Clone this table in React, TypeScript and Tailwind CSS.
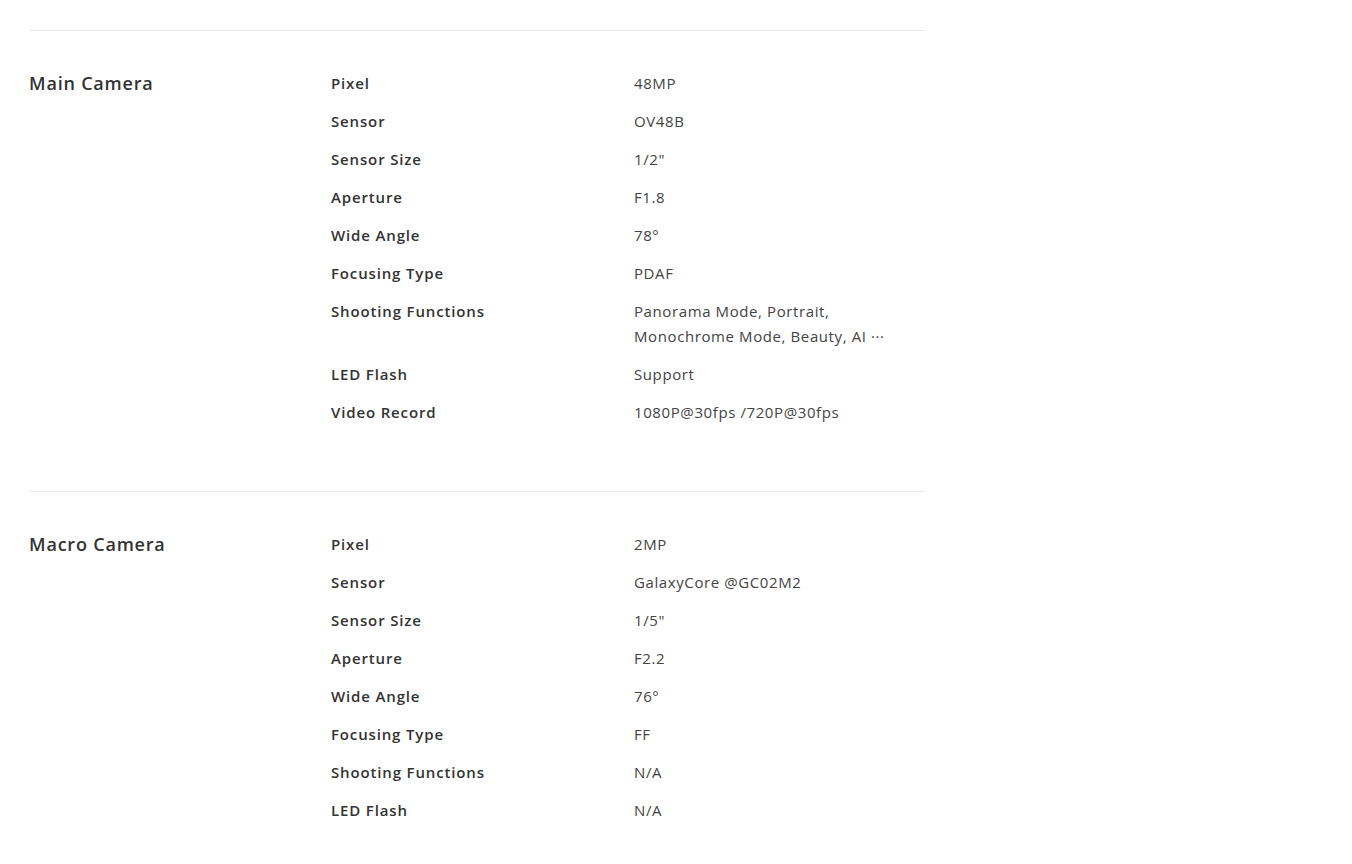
import React from 'react'

type Spec = { label: string; value: React.ReactNode }

const sections: { title: string; specs: Spec[] }[] = [
  {
    title: 'Main Camera',
    specs: [
      { label: 'Pixel', value: '48MP' },
      { label: 'Sensor', value: 'OV48B' },
      { label: 'Sensor Size', value: '1/2"' },
      { label: 'Aperture', value: 'F1.8' },
      { label: 'Wide Angle', value: '78°' },
      { label: 'Focusing Type', value: 'PDAF' },
      {
        label: 'Shooting Functions',
        value: (
          <>
            Panorama Mode, Portrait,
            <br />
            Monochrome Mode, Beauty, AI ···
          </>
        ),
      },
      { label: 'LED Flash', value: 'Support' },
      { label: 'Video Record', value: '1080P@30fps /720P@30fps' },
    ],
  },
  {
    title: 'Macro Camera',
    specs: [
      { label: 'Pixel', value: '2MP' },
      { label: 'Sensor', value: 'GalaxyCore @GC02M2' },
      { label: 'Sensor Size', value: '1/5"' },
      { label: 'Aperture', value: 'F2.2' },
      { label: 'Wide Angle', value: '76°' },
      { label: 'Focusing Type', value: 'FF' },
      { label: 'Shooting Functions', value: 'N/A' },
      { label: 'LED Flash', value: 'N/A' },
    ],
  },
]

export default function App() {
  return (
    <div className="min-h-screen bg-white pt-[30px] pl-[29px] text-[#333] font-['Open_Sans',sans-serif]">
      <div className="w-[896px]">
        {sections.map((sec) => (
          <section key={sec.title} className="flex border-t border-[#e8e8e8] pt-[40px] pb-[53px]">
            <h3 className="w-[302px] shrink-0 text-[18px] font-semibold leading-[25px] tracking-[0.8px]">{sec.title}</h3>
            <div className="flex-1">
              {sec.specs.map((sp) => (
                <div key={sp.label} className="mb-[13px] flex text-[15px] leading-[25px]">
                  <div className="w-[303px] shrink-0 font-semibold tracking-[0.85px]">{sp.label}</div>
                  <div className="flex-1 text-[#444] tracking-[0.6px]">{sp.value}</div>
                </div>
              ))}
            </div>
          </section>
        ))}
      </div>
    </div>
  )
}
